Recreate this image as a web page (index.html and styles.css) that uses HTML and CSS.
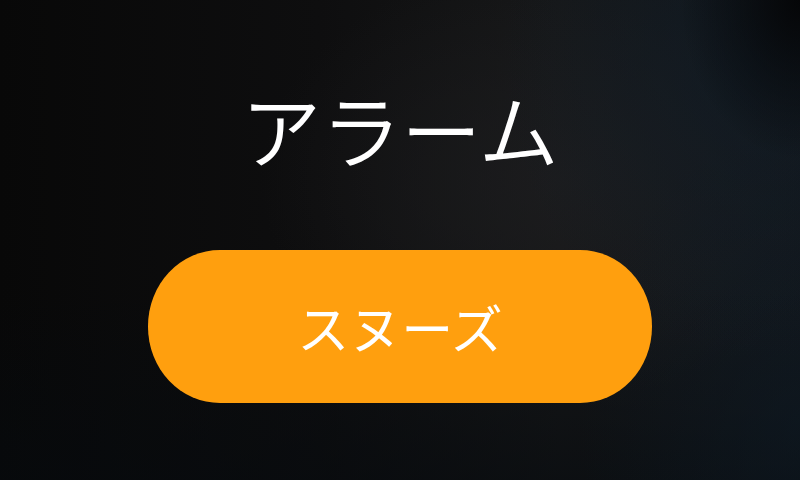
FILE: index.html
```html
<!DOCTYPE html>
<html lang="ja">
<head>
<meta charset="utf-8">
<link rel="stylesheet" href="styles.css">
</head>
<body>
<main class="screen">
  <h1 class="title">アラーム</h1>
  <button class="snooze">スヌーズ</button>
</main>
</body>
</html>
```
FILE: styles.css
```css
html, body {
  margin: 0;
  padding: 0;
  width: 800px;
  height: 480px;
  overflow: hidden;
}
body {
  font-family: "Noto Sans CJK JP", "Noto Sans", sans-serif;
  background-color: #0c0c0d;
}
.screen {
  width: 800px;
  height: 480px;
  box-sizing: border-box;
  display: flex;
  flex-direction: column;
  align-items: center;
  padding-top: 75px;
  background:
    radial-gradient(ellipse 120px 160px at 800px 0px, rgba(4,4,5,0.9), rgba(4,4,5,0) 100%),
    radial-gradient(ellipse 260px 300px at 760px 60px, rgba(14,30,44,0.55), rgba(14,30,44,0) 100%),
    radial-gradient(ellipse 220px 300px at 800px 420px, rgba(14,28,40,0.5), rgba(14,28,40,0) 100%),
    radial-gradient(ellipse 300px 220px at 560px 180px, rgba(30,30,32,0.7), rgba(30,30,32,0) 100%),
    linear-gradient(180deg, rgba(0,0,0,0) 60%, rgba(6,10,14,0.6) 100%),
    linear-gradient(90deg, #080808 0%, #0e0e0f 40%, #161718 70%, #131518 100%);
}
.title {
  margin: 0;
  font-size: 80px;
  line-height: 104px;
  font-weight: 350;
  color: #ffffff;
  letter-spacing: 0;
}
.snooze {
  margin-top: 71px;
  width: 504px;
  height: 153px;
  border: none;
  border-radius: 72px / 76px;
  background: #ff9f0e;
  color: #ffffff;
  font-family: "Noto Sans CJK JP", "Noto Sans", sans-serif;
  font-size: 52px;
  font-weight: 400;
  padding: 0;
  line-height: 1;
}
```
